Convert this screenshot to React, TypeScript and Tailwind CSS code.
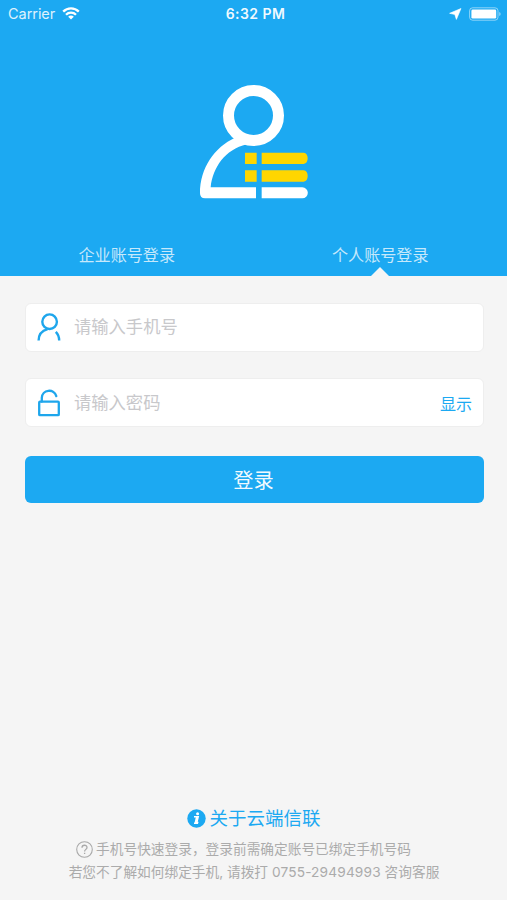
import React from 'react';

const WifiIcon = () => (
  <svg width="18" height="13" viewBox="0 0 18 13" className="ml-[7px]" fill="none" stroke="white" strokeWidth="2.3">
    <path d="M1.2 4.6a11 11 0 0 1 15.6 0" />
    <path d="M4 7.7a7 7 0 0 1 10 0" />
    <path d="M9 12.6 6.2 9.8a3.9 3.9 0 0 1 5.6 0Z" fill="white" stroke="none" />
  </svg>
);

const LogoIcon = () => (
  <svg width="130" height="135" viewBox="0 0 390 405">
    <circle cx="190.5" cy="121.5" r="75" fill="none" stroke="white" strokeWidth="33" />
    <path
      d="M135 188C74 216 30 278 30 355Q30 370 45 370H198V337H62C68 278 105 224 170 208Z"
      fill="white"
    />
    <path d="M215 337H337a16.5 16.5 0 0 1 0 33H215Z" fill="white" />
    <g fill="#ffd600">
      <path d="M165 233h35v34h-35zM165 286h35v34h-35z" />
      <path d="M215 233H341q12 2 12 17t-12 17H215ZM215 286H341q12 2 12 17t-12 17H215Z" />
    </g>
  </svg>
);

const UserIcon = () => (
  <svg width="24" height="30" viewBox="0 0 24 30" fill="none" stroke="#1ea6ec" strokeWidth="2.4">
    <circle cx="12.6" cy="8.7" r="7.3" />
    <path d="M1.6 27.6c0-6 3.2-9.8 9-11.4" />
    <path d="M18.8 18.8c2.2 2.2 3.4 5 3.4 8.8" />
  </svg>
);

const LockIcon = () => (
  <svg width="24" height="30" viewBox="0 0 24 30" fill="none" stroke="#1ea6ec" strokeWidth="2.3">
    <rect x="2.2" y="13.6" width="19.6" height="13.6" rx="0.8" />
    <path d="M4.8 13.5V9.8a7.4 7.4 0 0 1 14.5-1.7" strokeLinecap="round" />
  </svg>
);

export default function App() {
  return (
    <div className="flex h-[900px] w-[507px] flex-col overflow-hidden bg-[#f5f5f5] font-['Inter','Noto_Sans_CJK_SC',sans-serif]">
      <header className="flex h-[276px] shrink-0 flex-col bg-[#1ca9f2] text-white">
        <div className="grid h-[27px] shrink-0 grid-cols-3 items-center pl-2 pr-[5px]">
          <div className="flex items-center text-[14.5px] leading-none">
            <span className="pt-px tracking-[-0.05px] opacity-85">Carrier</span>
            <WifiIcon />
          </div>
          <span className="pl-px text-center text-[14px] font-semibold tracking-[0.45px] text-white/95">6:32 PM</span>
          <div className="flex items-center justify-end">
            <svg width="13" height="13" viewBox="0 0 13 13" className="mr-[7px]">
              <path d="M12 1.5 0.6 6.3 5.8 7.5 7.4 12.4Z" fill="white" stroke="white" strokeWidth="0.6" strokeLinejoin="round" />
            </svg>
            <svg width="33" height="14" viewBox="0 0 33 14">
              <rect x="0.6" y="0.8" width="28.4" height="12.4" rx="3" fill="none" stroke="white" strokeOpacity="0.5" />
              <rect x="2.4" y="2.6" width="24.8" height="8.9" rx="1.3" fill="white" />
              <path d="M30.2 5c2 .7 2 3.3 0 4Z" fill="white" fillOpacity="0.5" />
            </svg>
          </div>
        </div>
        <div className="flex h-[207px] shrink-0 justify-center pl-0.5 pt-12">
          <LogoIcon />
        </div>
        <nav className="grid h-[42px] grid-cols-2 text-center text-[16.1px] leading-[42px] text-white/75">
          <a>企业账号登录</a>
          <a className="relative">
            个人账号登录
            <svg width="18" height="9" viewBox="0 0 18 9" className="absolute bottom-0 left-1/2 -translate-x-1/2">
              <path d="M0 9 9 0l9 9Z" fill="#f5f5f5" />
            </svg>
          </a>
        </nav>
      </header>

      <main className="flex flex-1 flex-col pl-[24.5px] pr-[23.5px] pt-[27px]">
        <div className="flex h-[49px] items-center rounded-[6px] border border-[#eeeeee] bg-white pl-[11.5px]">
          <UserIcon />
          <span className="ml-[13px] pb-px text-[17.3px] leading-6 text-[#c8c8cb]">请输入手机号</span>
        </div>
        <div className="mt-[26px] flex h-[49px] items-center rounded-[6px] border border-[#eeeeee] bg-white pl-[11.5px] pr-[10.5px]">
          <LockIcon />
          <span className="ml-[13px] text-[17.3px] leading-6 text-[#c8c8cb]">请输入密码</span>
          <span className="ml-auto pt-0.5 text-[16px] text-[#1ca9f2]">显示</span>
        </div>
        <button className="mt-[29px] h-[47px] rounded-[6px] bg-[#1ca9f2] pr-px pt-[3px] text-[20.3px] leading-none text-white/95">登录</button>

        <footer className="mt-auto flex flex-col items-center pb-4 text-[#ababab]">
          <div className="flex h-7 items-center text-[18.5px] text-[#1ca9f2]">
            <svg width="19" height="19" viewBox="0 0 19 19" className="-mt-px mr-[3px]">
              <circle cx="9.5" cy="9.5" r="9.2" fill="#1ca9f2" />
              <circle cx="10.6" cy="4.7" r="1.5" fill="white" />
              <path d="M7 7.8h4.2L9.8 13.5h1.6M7 14.2h4" fill="none" stroke="white" strokeWidth="1.5" />
              <path d="M9.9 8 8.6 14" stroke="white" strokeWidth="2.1" />
            </svg>
            关于云端信联
          </div>
          <div className="mt-[5px] flex h-[23px] items-center whitespace-nowrap pr-[21px] text-[13.7px]">
            <svg width="17" height="17" viewBox="0 0 17 17" className="mr-[3px]" fill="none" stroke="#a9a9a9" strokeWidth="1.1">
              <circle cx="8.5" cy="8.5" r="7.8" />
              <path d="M6 6.8c0-3.4 5-3.3 5-.3 0 1.8-2.4 2-2.4 4M8.6 11.7v1.4" strokeWidth="1.3" />
            </svg>
            手机号快速登录，登录前需确定账号已绑定手机号码
          </div>
          <div className="h-[23px] whitespace-nowrap text-[13.7px] leading-[23px]">
            若您不了解如何绑定手机, 请拨打 <span className="tracking-[0.15px]">0755-29494993</span> 咨询客服
          </div>
        </footer>
      </main>
    </div>
  );
}
